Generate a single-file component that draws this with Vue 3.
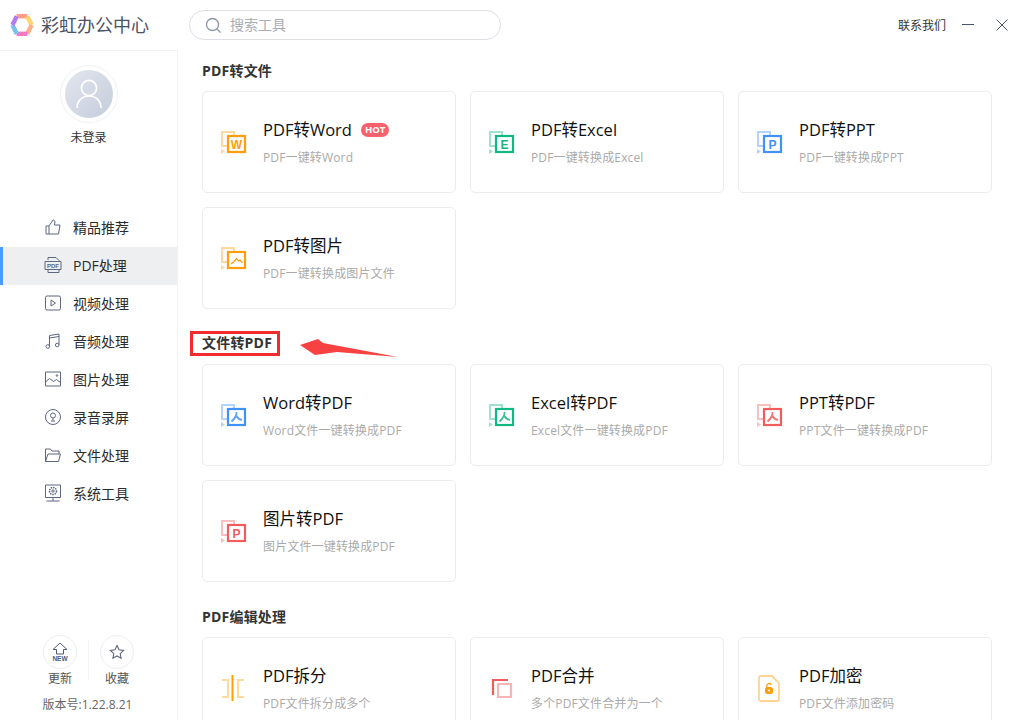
<script setup>
const navItems = [
  { key: "good", label: "精品推荐" },
  { key: "pdf", label: "PDF处理", active: true },
  { key: "video", label: "视频处理" },
  { key: "audio", label: "音频处理" },
  { key: "image", label: "图片处理" },
  { key: "record", label: "录音录屏" },
  { key: "folder", label: "文件处理" },
  { key: "system", label: "系统工具" },
];

const orange = "#ff9d0b";
const green = "#10b981";
const blue = "#3f92fb";
const red = "#f25c5c";

const sections = [
  {
    title: "PDF转文件",
    marked: false,
    cards: [
      { title: "PDF转Word", desc: "PDF一键转Word", color: orange, letter: "W", hot: true },
      { title: "PDF转Excel", desc: "PDF一键转换成Excel", color: green, letter: "E" },
      { title: "PDF转PPT", desc: "PDF一键转换成PPT", color: blue, letter: "P" },
      { title: "PDF转图片", desc: "PDF一键转换成图片文件", color: orange, kind: "pic" },
    ],
  },
  {
    title: "文件转PDF",
    marked: true,
    cards: [
      { title: "Word转PDF", desc: "Word文件一键转换成PDF", color: blue, kind: "acrobat" },
      { title: "Excel转PDF", desc: "Excel文件一键转换成PDF", color: green, kind: "acrobat" },
      { title: "PPT转PDF", desc: "PPT文件一键转换成PDF", color: red, kind: "acrobat" },
      { title: "图片转PDF", desc: "图片文件一键转换成PDF", color: red, letter: "P" },
    ],
  },
  {
    title: "PDF编辑处理",
    marked: false,
    cards: [
      { title: "PDF拆分", desc: "PDF文件拆分成多个", color: orange, kind: "split" },
      { title: "PDF合并", desc: "多个PDF文件合并为一个", color: red, kind: "merge" },
      { title: "PDF加密", desc: "PDF文件添加密码", color: orange, kind: "lock" },
    ],
  },
];
</script>

<template>
  <div class="app">
    <header class="topbar">
      <div class="brand">
        <svg class="logo" width="24" height="22" viewBox="0 0 24 22" fill="none" stroke-width="4.400">
          <defs>
            <pattern id="stripes" width="2" height="2" patternUnits="userSpaceOnUse" patternTransform="rotate(45)">
              <rect width="1" height="2" fill="#fff" opacity=".3" />
            </pattern>
          </defs>
          <path d="M6.600 2.200H17.400" stroke="#ff8a70" />
          <path d="M17.200 2.200L21.600 11" stroke="#ffcb52" />
          <path d="M21.600 11L17.200 19.800" stroke="#fda070" />
          <path d="M17.400 19.800H6.600" stroke="#f060b8" />
          <path d="M6.800 19.800L2.400 11" stroke="#5cb8f0" />
          <path d="M2.400 11L6.800 2.200" stroke="#a860f0" />
          <rect width="24" height="22" fill="url(#stripes)" />
        </svg>
        <span class="brand-name">彩虹办公中心</span>
      </div>
      <div class="search">
        <svg width="17" height="17" viewBox="0 0 17 17" fill="none" stroke="#8d96a8" stroke-width="1.300">
          <circle cx="7.500" cy="7.500" r="6" />
          <path d="M12 12l3.600 3.600" />
        </svg>
        <span>搜索工具</span>
      </div>
      <div class="window-tools">
        <span class="contact">联系我们</span>
        <svg width="12" height="12" viewBox="0 0 12 12" stroke="#4a5266" stroke-width="1">
          <path d="M0 5.500h12" />
        </svg>
        <svg width="12" height="12" viewBox="0 0 12 12" stroke="#4a5266" stroke-width="1">
          <path d="M.5.5l11 11M11.500.5l-11 11" />
        </svg>
      </div>
    </header>

    <div class="body">
      <aside class="sidebar">
        <div class="user">
          <div class="avatar-ring">
            <div class="avatar">
              <svg width="26" height="30" viewBox="0 0 26 30" fill="none" stroke="#fff" stroke-width="1.600">
                <circle cx="13" cy="9" r="7.600" />
                <path d="M1 29c0-7 5-12 12-12s12 5 12 12" />
              </svg>
            </div>
          </div>
          <span class="user-name">未登录</span>
        </div>

        <nav class="nav">
          <div v-for="item in navItems" :key="item.key" class="nav-item" :class="{ active: item.active }">
            <svg class="nav-icon" width="18" height="18" viewBox="0 0 18 18" fill="none" stroke="#5d6780" stroke-width="1">
              <template v-if="item.key === 'good'">
                <path d="M2 8h3v8H2zM5 8l4-6c1.300 0 2 .8 2 2l-.6 3H16l-1.500 9H5" />
              </template>
              <template v-else-if="item.key === 'pdf'">
                <path d="M4 4V1.500h8L15 4.500V5M4 14v2.500h11V14" />
                <path d="M1 5.500h16v8H1z" />
                <text x="9" y="12" class="pdf-mini" text-anchor="middle">PDF</text>
              </template>
              <template v-else-if="item.key === 'video'">
                <rect x="1.500" y="2" width="15" height="14" rx="1.500" />
                <path d="M7 6l4.500 3L7 12z" />
              </template>
              <template v-else-if="item.key === 'audio'">
                <path d="M5.500 14V3.500L15 2v10.500M5.500 6l9.500-1.500" />
                <circle cx="3.800" cy="14.500" r="1.800" />
                <circle cx="13.200" cy="13" r="1.800" />
              </template>
              <template v-else-if="item.key === 'image'">
                <path d="M1.500 2h15v14h-15z" />
                <path d="M1.500 12l4-3.500 4 3 3-2 4 3" />
                <circle cx="13" cy="5.500" r=".8" />
              </template>
              <template v-else-if="item.key === 'record'">
                <circle cx="9" cy="9" r="7.500" />
                <circle cx="9" cy="7.500" r="2.500" />
                <path d="M9 10v2.500M7 13h4" />
              </template>
              <template v-else-if="item.key === 'folder'">
                <path d="M1.500 15.500V3h5l1.500 2h7v3" />
                <path d="M1.500 15.500L4 8h12.500l-2 7.500z" />
              </template>
              <template v-else>
                <path d="M1.500 1h15v12.500h-15zM9 13.500V17M2.500 17h13" />
                <circle cx="9" cy="7" r="3.500" stroke-dasharray="1.500 .8" stroke-width="1.500" />
                <circle cx="9" cy="7" r="1.200" />
              </template>
            </svg>
            <span>{{ item.label }}</span>
          </div>
        </nav>

        <div class="side-foot">
          <div class="foot-actions">
            <div class="foot-action">
              <div class="foot-circle">
                <svg width="18" height="20" viewBox="0 0 18 20" fill="none" stroke="#4f5a78" stroke-width="1">
                  <path d="M9 1l7 6.500h-3.500V12h-7V7.500H2z" />
                  <text x="9" y="19" class="new-mini" text-anchor="middle">NEW</text>
                </svg>
              </div>
              <span>更新</span>
            </div>
            <i class="foot-split"></i>
            <div class="foot-action">
              <div class="foot-circle">
                <svg width="16" height="16" viewBox="0 0 16 16" fill="none" stroke="#5d6780" stroke-width="1.100">
                  <path d="M8 1.500l2 4.300 4.600.6-3.400 3.200.9 4.700L8 12l-4.100 2.300.9-4.700L1.400 6.400 6 5.800z" />
                </svg>
              </div>
              <span>收藏</span>
            </div>
          </div>
          <div class="version">版本号:1.22.8.21</div>
        </div>
      </aside>

      <main class="main">
        <section v-for="section in sections" :key="section.title" class="section">
          <div class="section-title">
            <h2 :class="{ marked: section.marked }">{{ section.title }}</h2>
            <svg v-if="section.marked" class="arrow" width="100" height="20" viewBox="0 0 100 20">
              <path d="M0 7L18 1L23 5L98 19L37 14L15 17Z" fill="#f84242" />
            </svg>
          </div>
          <div class="cards">
            <div v-for="card in section.cards" :key="card.title" class="card">
              <svg class="card-icon" width="26" height="30" viewBox="0 0 26 30" fill="none" :stroke="card.color">
                <template v-if="card.kind === 'split'">
                  <path d="M1 7h6v17H1M23 7h-6v17h6" stroke-width="2" opacity=".4" />
                  <path d="M11.500 2v26" stroke-width="2" />
                </template>
                <template v-else-if="card.kind === 'merge'">
                  <path d="M4 22V7h15" stroke-width="2.200" />
                  <path d="M9 11h13v13H9z" stroke-width="2.200" opacity=".45" />
                </template>
                <template v-else-if="card.kind === 'lock'">
                  <path d="M2 5a2 2 0 0 1 2-2h11l7 7v16a2 2 0 0 1-2 2H4a2 2 0 0 1-2-2z" stroke-width="1.800" opacity=".45" />
                  <rect x="8" y="14" width="8" height="7" rx="2.500" :fill="card.color" stroke="none" />
                  <path d="M9.800 14.500v-1.800a2.300 2.300 0 0 1 4.400-.8" stroke-width="1.400" />
                  <circle cx="12" cy="17.500" r="1.100" fill="#fff" stroke="none" />
                </template>
                <template v-else>
                  <path d="M6 19H1V5h12v4" stroke-width="2" opacity=".4" />
                  <path d="M0 22l4 2.500L0 27z" :fill="card.color" stroke="none" opacity=".4" />
                  <rect x="7" y="9" width="17" height="16" stroke-width="2.200" fill="#fff" />
                  <text v-if="card.letter" x="15.500" y="21.500" class="icon-letter" text-anchor="middle" :fill="card.color" stroke="none">{{ card.letter }}</text>
                  <path v-else-if="card.kind === 'pic'" d="M10 21l3-2.500 2.500-3 2 2.500 1.500-1 2.500 3" stroke-width="1.200" />
                  <path v-else d="M15.500 12c.4 3-2 6.800-5 9.500M15.500 16c1 2 3 3.500 5.500 4" stroke-width="1.800" opacity=".85" />
                </template>
              </svg>
              <div class="card-text">
                <div class="card-title">
                  <span>{{ card.title }}</span>
                  <em v-if="card.hot" class="hot">HOT</em>
                </div>
                <div class="card-desc">{{ card.desc }}</div>
              </div>
            </div>
          </div>
        </section>
      </main>
    </div>
  </div>
</template>

<style>
html,
body {
  margin: 0;
  overflow: hidden;
  background: #fff;
}
</style>

<style scoped>
.app {
  width: 1016px;
  height: 720px;
  overflow: hidden;
  font-family: "Open Sans", "Noto Sans CJK SC", sans-serif;
  color: #222;
  background: #fff;
  position: relative;
}

.topbar {
  height: 50px;
  display: flex;
  align-items: center;
  padding: 0 8px 0 10px;
}

.brand {
  width: 179px;
  display: flex;
  align-items: center;
  gap: 7px;
}

.brand-name {
  font-size: 18px;
  color: #4a5266;
  margin-top: -2px;
}

.search {
  width: 312px;
  height: 30px;
  box-sizing: border-box;
  border: 1px solid #dcdfe4;
  border-radius: 15px;
  display: flex;
  align-items: center;
  gap: 8px;
  padding-left: 15px;
  font-size: 14px;
  color: #a9adb5;
}

.search span {
  margin-top: -2px;
}

.window-tools {
  margin-left: auto;
  display: flex;
  align-items: center;
  gap: 16px;
}

.window-tools svg + svg {
  margin-left: 6px;
}

.contact {
  font-size: 12px;
  color: #333;
  margin-top: -1px;
}

.body {
  display: flex;
  height: 670px;
}

.sidebar {
  width: 178px;
  flex: none;
  box-sizing: border-box;
  border-right: 1px solid #f1f2f4;
  border-top: 1px solid #f1f2f4;
  display: flex;
  flex-direction: column;
}

.user {
  display: flex;
  flex-direction: column;
  align-items: center;
  padding-top: 14px;
}

.avatar-ring {
  width: 58px;
  height: 58px;
  box-sizing: border-box;
  border: 1px solid #f0f1f4;
  border-radius: 50%;
  display: flex;
  align-items: center;
  justify-content: center;
}

.avatar {
  width: 48px;
  height: 48px;
  border-radius: 50%;
  background: linear-gradient(135deg, #e2e6ee, #c4ccdb);
  display: flex;
  align-items: center;
  justify-content: center;
}

.user-name {
  margin-top: 6px;
  font-size: 12px;
  line-height: 18px;
  color: #333;
}

.nav {
  margin-top: 62px;
}

.nav-item {
  height: 38px;
  box-sizing: border-box;
  display: flex;
  align-items: center;
  gap: 11px;
  padding-left: 44px;
  font-size: 14px;
  color: #2b2b2b;
}

.nav-item span {
  margin-top: -2px;
}

.nav-icon {
  margin-top: -2px;
}

.nav-item.active {
  background: #eeeff1;
  box-shadow: inset 3px 0 0 #4a9bff;
}

.pdf-mini {
  font: 700 6px "Liberation Sans", sans-serif;
  fill: #5d6780;
  stroke: none;
}

.new-mini {
  font: 700 6.500px "Liberation Sans", sans-serif;
  fill: #4f5a78;
  stroke: none;
}

.side-foot {
  margin-top: auto;
  padding-bottom: 6px;
  display: flex;
  flex-direction: column;
  align-items: center;
}

.foot-actions {
  display: flex;
  align-items: flex-start;
  gap: 11px;
}

.foot-action {
  width: 34px;
  display: flex;
  flex-direction: column;
  align-items: center;
  font-size: 12px;
  line-height: 18px;
  color: #555;
  white-space: nowrap;
}

.foot-action span {
  margin-top: 1px;
}

.foot-circle {
  width: 34px;
  height: 34px;
  box-sizing: border-box;
  border: 1px solid #eceef0;
  border-radius: 50%;
  display: flex;
  align-items: center;
  justify-content: center;
}

.foot-split {
  width: 1px;
  height: 40px;
  margin-top: 5px;
  background: #f3f4f5;
}

.version {
  margin-top: 8px;
  font-size: 12px;
  line-height: 18px;
  color: #666;
  margin-left: -2px;
}

.main {
  flex: 1;
  min-width: 0;
  padding-left: 24px;
  overflow: hidden;
}

.section {
  margin-bottom: 14px;
}

.section-title {
  position: relative;
  height: 41px;
  display: flex;
  align-items: center;
}

.section-title h2 {
  margin: -2px 0 0;
  font-size: 14px;
  font-weight: 700;
  letter-spacing: .2px;
  color: #333;
}

.section-title h2.marked {
  outline: 3px solid #f22c2c;
  box-sizing: border-box;
  width: 84px;
  height: 19px;
  margin: -1px 0 0 -9px;
  padding-left: 9px;
  line-height: 18px;
}

.arrow {
  position: absolute;
  left: 98px;
  top: 15px;
}

.cards {
  display: grid;
  grid-template-columns: repeat(3, 254px);
  gap: 14px;
}

.card {
  height: 102px;
  box-sizing: border-box;
  border: 1px solid #ececee;
  border-radius: 5px;
  display: flex;
  align-items: center;
  gap: 16px;
  padding-left: 18px;
}

.card-text {
  display: flex;
  flex-direction: column;
}

.card-title {
  display: flex;
  align-items: center;
  gap: 9px;
  font-size: 16.500px;
  line-height: 24px;
  color: #111;
}

.card-desc {
  margin-top: 7px;
  font-size: 12px;
  line-height: 18px;
  letter-spacing: .15px;
  color: #aaa;
}

.hot {
  font: 700 9.500px/14px "Open Sans", sans-serif;
  height: 14px;
  padding: 0 4px;
  border-radius: 7px;
  color: #fff;
  background: #f8616c;
}

.icon-letter {
  font: 700 12px "Liberation Sans", sans-serif;
}
</style>
